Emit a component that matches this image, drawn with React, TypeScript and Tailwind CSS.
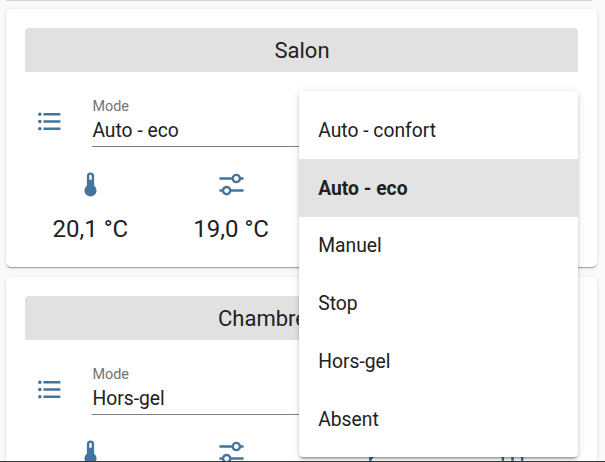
import type { ReactNode } from "react";

const LIST =
  "M7 5H21V7H7V5M7 13V11H21V13H7M4 4.5A1.5 1.5 0 0 1 5.5 6A1.5 1.5 0 0 1 4 7.5A1.5 1.5 0 0 1 2.5 6A1.5 1.5 0 0 1 4 4.5M4 10.5A1.5 1.5 0 0 1 5.5 12A1.5 1.5 0 0 1 4 13.5A1.5 1.5 0 0 1 2.5 12A1.5 1.5 0 0 1 4 10.5M7 19V17H21V19H7M4 16.5A1.5 1.5 0 0 1 5.5 18A1.5 1.5 0 0 1 4 19.5A1.5 1.5 0 0 1 2.5 18A1.5 1.5 0 0 1 4 16.5Z";
const THERMOMETER =
  "M15 13V5A3 3 0 0 0 9 5V13A5 5 0 1 0 15 13M12 4A1 1 0 0 1 13 5V8H11V5A1 1 0 0 1 12 4Z";
const TUNE =
  "M8 13C6.14 13 4.59 14.28 4.14 16H2V18H4.14C4.59 19.72 6.14 21 8 21S11.41 19.72 11.86 18H22V16H11.86C11.41 14.28 9.86 13 8 13M8 19C6.9 19 6 18.1 6 17C6 15.9 6.9 15 8 15S10 15.9 10 17C10 18.1 9.1 19 8 19M19.86 6C19.41 4.28 17.86 3 16 3S12.59 4.28 12.14 6H2V8H12.14C12.59 9.72 14.14 11 16 11S19.41 9.72 19.86 8H22V6H19.86M16 9C14.9 9 14 8.1 14 7C14 5.9 14.9 5 16 5S18 5.9 18 7C18 8.1 17.1 9 16 9Z";
const FLASH = "M7 2V13H10V22L17 10H13L17 2H7Z";
const RADIATOR = "M3 4H5V20H3V4M11 4H13V20H11V4M19 4H21V20H19V4Z";

function Icon({ d }: { d: string }) {
  return (
    <svg viewBox="0 0 24 24" className="size-[29px] shrink-0 fill-[#44739e]">
      <path d={d} />
    </svg>
  );
}

function Reading({ d, children }: { d: string; children?: ReactNode }) {
  return (
    <div className="flex flex-1 flex-col items-center">
      <Icon d={d} />
      <div className="mt-[13px] text-[24px] leading-[35px] whitespace-nowrap">{children}</div>
    </div>
  );
}

function RoomCard({ name, mode }: { name: ReactNode; mode: string }) {
  return (
    <section className="mr-[8px] ml-[6px] h-[258px] shrink-0 rounded-[5px] bg-white px-[19px] pt-[19px] shadow-[0_2px_1px_-1px_rgba(0,0,0,0.2),0_1px_1px_0_rgba(0,0,0,0.14),0_1px_4px_0_rgba(0,0,0,0.12)]">
      <h2 className="flex h-[44px] items-center justify-center rounded-t-[4px] bg-[#e1e1e1] pl-px text-[22px]">
        {name}
      </h2>
      <div className="flex h-[75px] pr-[4px] pl-[10px]">
        <div className="mt-[34.5px]">
          <Icon d={LIST} />
        </div>
        <div className="ml-[28px] flex-1 border-b border-[#808080] pl-[0.4px]">
          <div className="mt-[26px] text-[14.4px] leading-[18px] text-[#737373]">Mode</div>
          <div className="mt-[1.5px] text-[19.3px] leading-[26px]">{mode}</div>
        </div>
      </div>
      <div className="mr-[-5px] ml-[-5px] mt-[23px] flex">
        <Reading d={THERMOMETER}>20,1 °C</Reading>
        <Reading d={TUNE}>19,0 °C</Reading>
        <Reading d={FLASH} />
        <Reading d={RADIATOR} />
      </div>
    </section>
  );
}

const modes = ["Auto - confort", "Auto - eco", "Manuel", "Stop", "Hors-gel", "Absent"];

export default function App() {
  return (
    <main className="relative flex h-[462px] w-[605px] flex-col overflow-hidden bg-[#fafafa] font-['Roboto',sans-serif] text-[#212121]">
      <div className="mr-[12px] ml-[6px] h-px shrink-0 rounded-b-[5px] bg-[#d4d4d4]" />
      <div className="mt-[8px] flex flex-col gap-[10.4px]">
        <RoomCard name="Salon" mode="Auto - eco" />
        <RoomCard name={<span className="pr-[79px]">Chambre</span>} mode="Hors-gel" />
      </div>
      <ul className="absolute top-[91px] left-[299px] h-[366px] w-[279px] rounded-[4px] bg-white pt-[10px] shadow-[0_3px_3px_-2px_rgba(0,0,0,0.35),0_2px_3px_0_rgba(0,0,0,0.14),0_1px_8px_0_rgba(0,0,0,0.12)]">
        {modes.map((mode) => (
          <li
            key={mode}
            className={
              mode === "Auto - eco"
                ? "flex h-[57.75px] items-center bg-[#e3e3e3] px-[19.2px] pt-[3px] text-[19.3px] font-bold"
                : "flex h-[57.75px] items-center px-[19.2px] pt-[3px] text-[19.3px]"
            }
          >
            {mode}
          </li>
        ))}
      </ul>
      <div className="absolute inset-x-0 bottom-0 h-px bg-[#303632]" />
    </main>
  );
}
